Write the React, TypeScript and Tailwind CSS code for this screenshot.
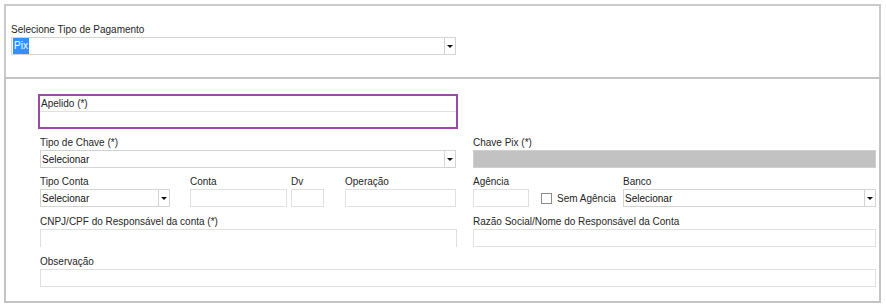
import type { ReactNode } from "react";

const Label = ({ children, className = "" }: { children: ReactNode; className?: string }) => (
  <div className={`h-[14px] text-[10px] leading-[14px] text-[#262626] whitespace-nowrap ${className}`}>{children}</div>
);

const Input = ({ className = "" }: { className?: string }) => (
  <div className={`h-[18px] border border-[#e0e0e0] bg-white ${className}`} />
);

const Arrow = () => (
  <div className="w-0 h-0 border-l-[3px] border-r-[3px] border-t-[3px] border-l-transparent border-r-transparent border-t-[#111]" />
);

const Select = ({ value, className = "" }: { value: string; className?: string }) => (
  <div className={`h-[18px] flex border border-[#d4d4d4] bg-white ${className}`}>
    <div className="flex-1 flex items-center pl-[1px] text-[10px] text-[#111]">{value}</div>
    <div className="w-[11px] border-l border-[#d4d4d4] flex items-center justify-center">
      <Arrow />
    </div>
  </div>
);

const Field = ({ label, children, className = "" }: { label: string; children: ReactNode; className?: string }) => (
  <div className={`flex flex-col ${className}`}>
    <Label>{label}</Label>
    {children}
  </div>
);

export default function App() {
  return (
    <div className="w-[886px] h-[307px] bg-white pl-[4px] pt-[4px]" style={{ fontFamily: '"Liberation Sans", Arial, sans-serif' }}>
      {/* tipo de pagamento */}
      <div className="w-[877px] h-[73px] border-t-2 border-l-2 border-r-2 border-[#cacaca] pl-[5px] pt-[17px]">
        <Label>Selecione Tipo de Pagamento</Label>
        <div className="w-[445px] h-[18px] flex border border-[#d4d4d4] bg-white">
          <div className="flex-1 flex items-center pl-[1px]">
            <span className="bg-[#3390ff] text-white text-[10px] leading-[16px] px-[1px]">Pix</span>
          </div>
          <div className="w-[11px] border-l border-[#d4d4d4] flex items-center justify-center">
            <Arrow />
          </div>
        </div>
      </div>

      {/* dados da conta */}
      <div className="w-[877px] h-[226px] border-2 border-[#c4c4c4] pl-[34px] pt-[15px] flex flex-col gap-[7px]">
        <div className="w-[420px] h-[35px] -ml-[2px] border-2 border-[#9c4aa8] flex flex-col">
          <Label className="pl-[1px] leading-[15px] h-[15px]">Apelido (*)</Label>
          <div className="flex-1 border-t border-[#e0e0e0]" />
        </div>

        <div className="flex gap-[17px]">
          <Field label="Tipo de Chave (*)" className="w-[416px]">
            <Select value="Selecionar" />
          </Field>
          <Field label="Chave Pix (*)" className="w-[403px]">
            <div className="h-[18px] bg-[#c2c2c2] border border-[#cfcfcf]" />
          </Field>
        </div>

        <div className="flex">
          <Field label="Tipo Conta" className="w-[130px]">
            <Select value="Selecionar" />
          </Field>
          <Field label="Conta" className="w-[97px] ml-[20px]">
            <Input />
          </Field>
          <Field label="Dv" className="w-[33px] ml-[4px]">
            <Input />
          </Field>
          <Field label="Operação" className="w-[111px] ml-[21px]">
            <Input />
          </Field>
          <Field label="Agência" className="w-[56px] ml-[17px]">
            <Input />
          </Field>
          <div className="flex flex-col ml-[12px]">
            <div className="h-[14px]" />
            <div className="h-[18px] flex items-center gap-[5px]">
              <div className="w-[11px] h-[11px] border border-[#8c8c8c] bg-white" />
              <span className="text-[10px] text-[#262626] whitespace-nowrap">Sem Agência</span>
            </div>
          </div>
          <Field label="Banco" className="w-[253px] ml-auto mr-[3px]">
            <Select value="Selecionar" />
          </Field>
        </div>

        <div className="flex gap-[16px] mt-[1px]">
          <Field label="CNPJ/CPF do Responsável da conta (*)" className="w-[417px]">
            <div className="h-[18px] border border-b-0 border-[#e0e0e0]" />
          </Field>
          <Field label="Razão Social/Nome do Responsável  da Conta" className="w-[403px]">
            <Input />
          </Field>
        </div>

        <Field label="Observação" className="w-[836px] mt-[1px]">
          <Input />
        </Field>
      </div>
    </div>
  );
}
